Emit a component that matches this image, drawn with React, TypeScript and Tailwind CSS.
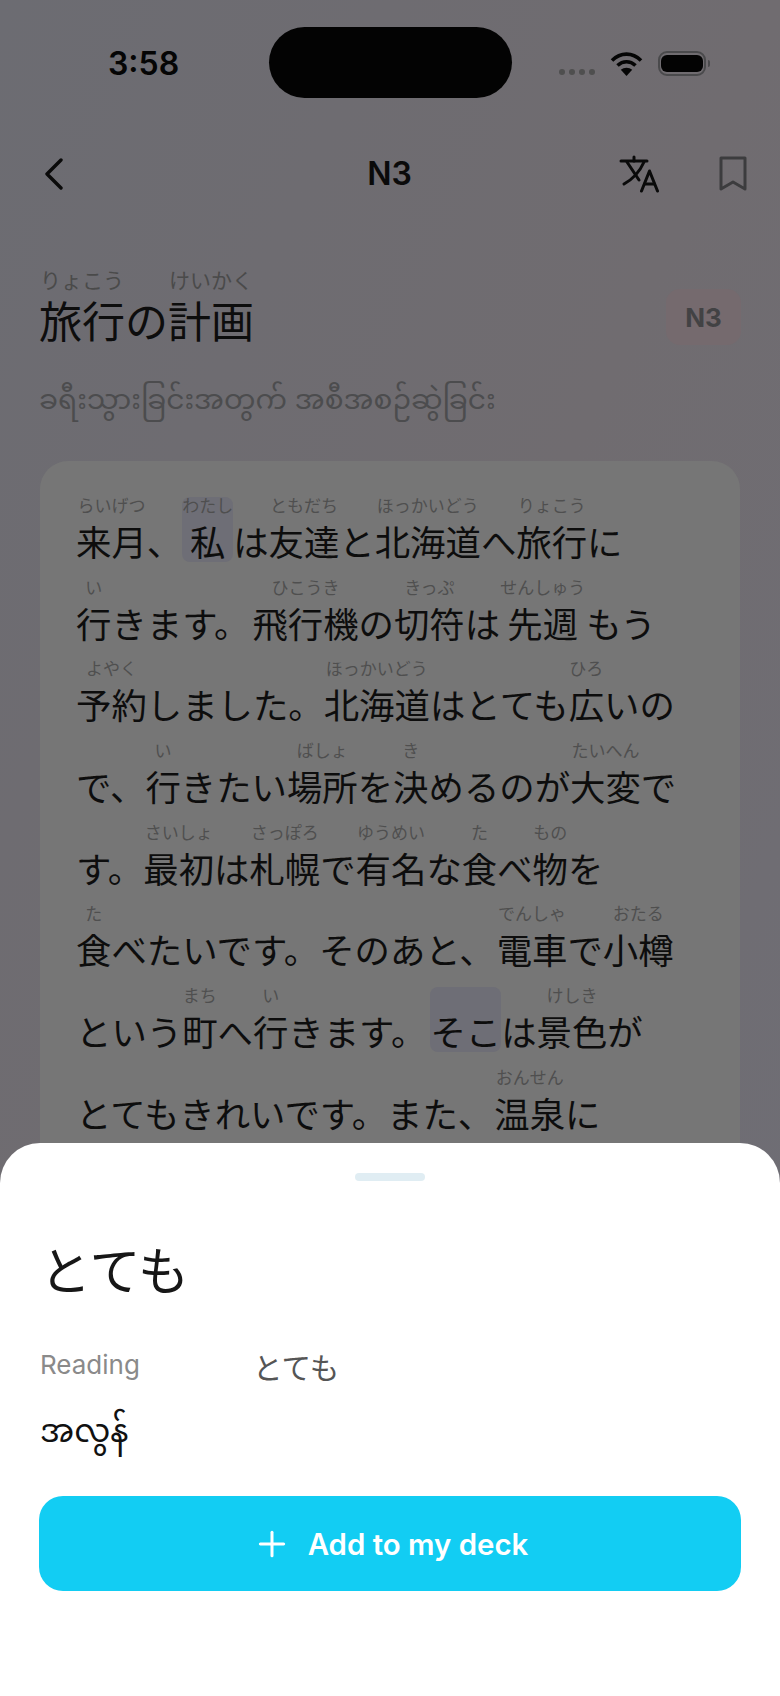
import { Plus } from 'lucide-react';

type Seg = { t: string; r?: string; hl?: boolean; cls?: string };

// one entry per wrapped line of the passage
const passage: Seg[][] = [
  [{ t: '来月', r: 'らいげつ' }, { t: '、' }, { t: '私', r: 'わたし', hl: true }, { t: 'は' }, { t: '友達', r: 'ともだち' }, { t: 'と' }, { t: '北海道', r: 'ほっかいどう' }, { t: 'へ' }, { t: '旅行', r: 'りょこう' }, { t: 'に' }],
  [{ t: '行', r: 'い' }, { t: 'きます。' }, { t: '飛行機', r: 'ひこうき', cls: 'ml-[3px]' }, { t: 'の' }, { t: '切符', r: 'きっぷ' }, { t: 'は' }, { t: '先週', r: 'せんしゅう' }, { t: 'もう', cls: 'ml-[1px]' }],
  [{ t: '予約', r: 'よやく' }, { t: 'しました。' }, { t: '北海道', r: 'ほっかいどう' }, { t: 'はとても' }, { t: '広', r: 'ひろ' }, { t: 'いの' }],
  [{ t: 'で、' }, { t: '行', r: 'い' }, { t: 'きたい' }, { t: '場所', r: 'ばしょ' }, { t: 'を' }, { t: '決', r: 'き' }, { t: 'めるのが' }, { t: '大変', r: 'たいへん' }, { t: 'で' }],
  [{ t: 'す。' }, { t: '最初', r: 'さいしょ' }, { t: 'は' }, { t: '札幌', r: 'さっぽろ' }, { t: 'で' }, { t: '有名', r: 'ゆうめい' }, { t: 'な' }, { t: '食', r: 'た' }, { t: 'べ' }, { t: '物', r: 'もの' }, { t: 'を' }],
  [{ t: '食', r: 'た' }, { t: 'べたいです。そのあと、' }, { t: '電車', r: 'でんしゃ', cls: 'ml-[2px]' }, { t: 'で' }, { t: '小樽', r: 'おたる' }],
  [{ t: 'という' }, { t: '町', r: 'まち' }, { t: 'へ' }, { t: '行', r: 'い' }, { t: 'きます。' }, { t: 'そこ', hl: true, cls: 'ml-[4px]' }, { t: 'は' }, { t: '景色', r: 'けしき' }, { t: 'が' }],
  [{ t: 'とてもきれいです。また、' }, { t: '温泉', r: 'おんせん', cls: 'ml-[1px]' }, { t: 'に' }],
];

const Wifi = () => (
  <svg width="33" height="25" viewBox="0 0 33 25" fill="none">
    <path d="M2 9.5C10.5 1 22.5 1 31 9.5" stroke="#050505" strokeWidth="3.6" />
    <path d="M7.5 14.5C12.8 9.5 20.2 9.5 25.5 14.5" stroke="#050505" strokeWidth="3.6" />
    <path d="M16.5 25L10.8 18.8C14 15.9 19 15.9 22.2 18.8Z" fill="#050505" />
  </svg>
);

const Bookmark = () => (
  <svg width="28" height="36" viewBox="0 0 28 36" fill="none">
    <path d="M2 2H26V33L14 26L2 33Z" stroke="#3c3c3e" strokeWidth="3" strokeLinejoin="round" />
  </svg>
);

const BackChevron = () => (
  <svg width="20" height="32" viewBox="0 0 20 32" fill="none">
    <path d="M17 2L3 16L17 30" stroke="#0a0a0a" strokeWidth="3.4" strokeLinecap="round" strokeLinejoin="round" />
  </svg>
);

const TranslateIcon = () => (
  <svg width="40" height="38" viewBox="0 0 40 38" fill="none" stroke="#0a0a0a" strokeWidth="3" strokeLinecap="round" strokeLinejoin="round">
    <path d="M2 6H28" />
    <path d="M15 2V6" />
    <path d="M8 7L20 25" />
    <path d="M25 7C21 16 14 24 5 29" />
    <path d="M22.5 36L30.5 16L38.5 36" />
    <path d="M25.5 29H35.5" />
  </svg>
);

const StatusBar = () => (
  <div className="flex h-[125px] items-start">
    <div className="w-[269px] pl-[108px] pt-[45px] text-[32px] leading-[38px] font-semibold text-[#050505]">3:58</div>
    <div className="mt-[27px] h-[71px] w-[243px] rounded-[36px] bg-[#030303]" />
    <div className="flex items-start pl-[47px] pt-[51px]">
      <div className="mt-[18px] flex gap-1">
        <span className="size-[6px] rounded-full bg-[#4f4f4f]" />
        <span className="size-[6px] rounded-full bg-[#4f4f4f]" />
        <span className="size-[6px] rounded-full bg-[#4f4f4f]" />
        <span className="size-[6px] rounded-full bg-[#4f4f4f]" />
      </div>
      <div className="ml-[15px]"><Wifi /></div>
      <div className="ml-[15px] flex h-[25px] w-[48px] items-center justify-center rounded-[9px] border-2 border-[#4a4a4c]">
        <div className="h-[17px] w-[42px] rounded-[6px] bg-[#030303]" />
      </div>
      <div className="ml-[2px] mt-[9px] h-[7px] w-[2px] rounded-r-full bg-[#4a4a4c]" />
    </div>
  </div>
);

const Header = () => (
  <div className="flex h-[98px] items-center pl-[44px] pr-[33px]">
    <BackChevron />
    <div className="flex-1 pl-[96px] text-center text-[32px] font-semibold leading-[40px] text-[#0a0a0a]">N3</div>
    <div className="mr-[60px]"><TranslateIcon /></div>
    <Bookmark />
  </div>
);

const RubyWord = ({ seg }: { seg: Seg }) => (
  <span className={`flex flex-col items-center rounded-lg ${seg.hl ? 'bg-[#6e6e76]' : ''} ${seg.cls ?? ''}`}>
    <span className="h-[19px] whitespace-nowrap text-[17px] leading-[19px] text-[#4f4f4f]">{seg.r ?? ''}</span>
    <span className="h-[46px] whitespace-nowrap text-[35.4px] leading-[55px] text-[#0d0d0d]">{seg.t}</span>
  </span>
);

const Sheet = () => (
  <div className="absolute inset-x-0 bottom-0 top-[1143px] rounded-t-[40px] bg-white px-[39px] pt-[30px]">
    <div className="mx-auto h-[8px] w-[70px] rounded-full bg-[#e0edf3]" />
    <div className="mt-[61px] pl-[1px] text-[51px] leading-[60px] text-[#171717]">とても</div>
    <div className="mt-[42px] flex items-center">
      <div className="w-[214px] pl-[1px] text-[26px] leading-[36px] text-[#8a8a8a]">Reading</div>
      <div className="mt-[6px] text-[29.5px] leading-[36px] text-[#555555]">とても</div>
    </div>
    <div className="mt-[15px] pl-[1px] text-[32px] leading-[60px] text-[#111111]">အလွန်</div>
    <button className="mt-[35px] flex h-[95px] w-[702px] items-center justify-center gap-[16px] rounded-[24px] bg-[#12cdf3] pt-[3px] text-[29.4px] font-semibold text-white">
      <Plus size={40} strokeWidth={1.8} className="-mt-[3px]" />
      <span>Add to my deck</span>
    </button>
  </div>
);

export default function App() {
  return (
    <div
      className="relative flex h-[1696px] w-[780px] flex-col overflow-hidden bg-gradient-to-br from-[#6c6c72] via-[#706c70] to-[#6e6e76]"
      style={{ fontFamily: 'Inter, "Noto Sans CJK JP", "Noto Sans Myanmar", sans-serif' }}
    >
      <StatusBar />
      <Header />
      <div className="flex items-start justify-between px-[39px] pt-[46px]">
        <div className="flex">
          <span className="flex flex-col items-center">
            <span className="text-[21px] leading-[24px] text-[#4a4a4a]">りょこう</span>
            <span className="mt-[3px] text-[43px] leading-[52px] text-[#0d0d0d]">旅行</span>
          </span>
          <span className="flex flex-col items-center">
            <span className="text-[21px] leading-[24px] text-transparent">&nbsp;</span>
            <span className="mt-[3px] text-[43px] leading-[52px] text-[#0d0d0d]">の</span>
          </span>
          <span className="flex flex-col items-center">
            <span className="text-[21px] leading-[24px] text-[#4a4a4a]">けいかく</span>
            <span className="mt-[3px] text-[43px] leading-[52px] text-[#0d0d0d]">計画</span>
          </span>
        </div>
        <div className="mt-[20px] flex h-[56px] w-[75px] items-center justify-center rounded-[14px] bg-[#756a6e] text-[26px] font-bold text-[#424244]">N3</div>
      </div>
      <div className="mt-[27px] px-[39px] text-[28px] leading-[48px] text-[#4c4c4e]">ခရီးသွားခြင်းအတွက် အစီအစဉ်ဆွဲခြင်း</div>
      <div className="mx-[40px] mt-[38px] flex-1 rounded-[28px] bg-[#767676] px-[36px] pt-[36px]">
        <div className="flex flex-col gap-[16.7px]">
          {passage.map((line, i) => (
            <div key={i} className="flex items-end">
              {line.map((seg, j) => (
                <RubyWord key={j} seg={seg} />
              ))}
            </div>
          ))}
        </div>
      </div>
      <Sheet />
    </div>
  );
}
